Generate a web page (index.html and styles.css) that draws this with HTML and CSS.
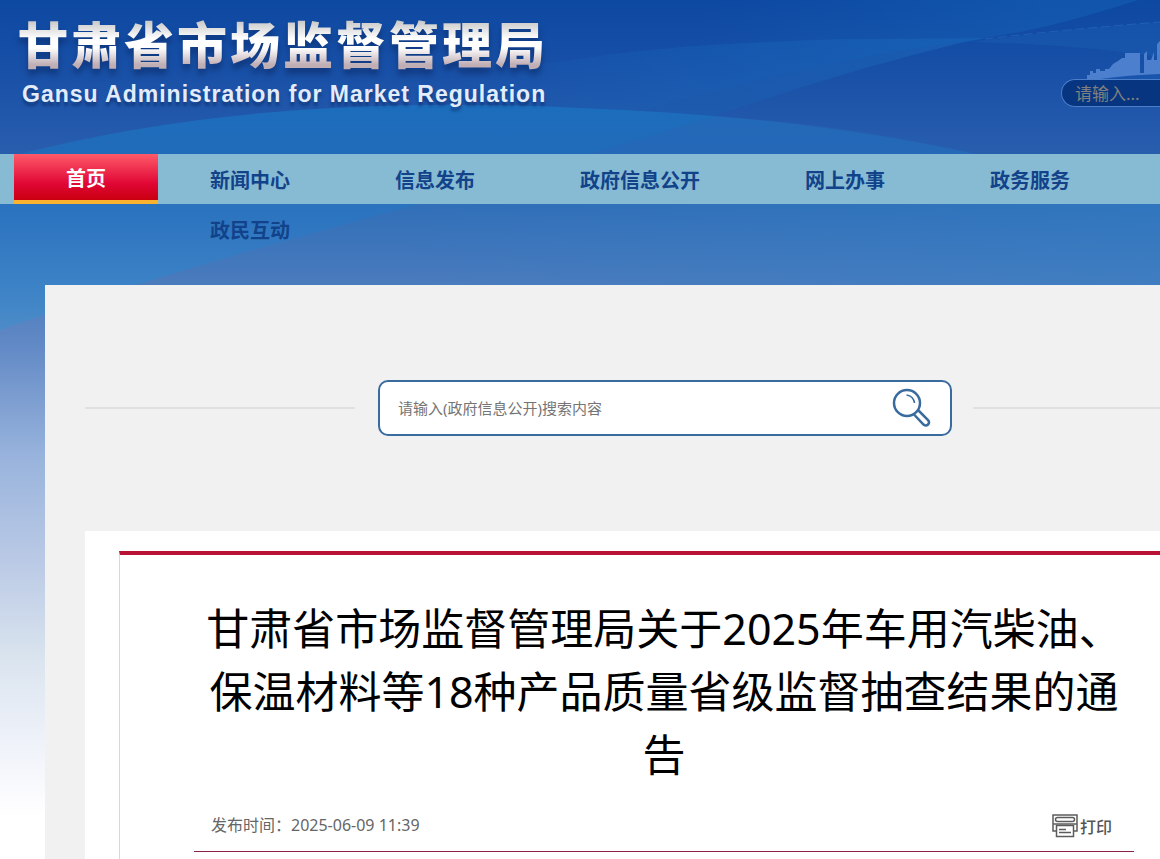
FILE: index.html
```
<!DOCTYPE html>
<html lang="zh-CN">
<head>
    <meta charset="UTF-8">
    <meta name="viewport" content="width=device-width, initial-scale=1.0">
    <title>甘肃省市场监督管理局</title>
    <link rel="stylesheet" href="styles.css">
</head>
<body>
    <div class="page">
        <svg class="page-bg" viewBox="0 0 1160 859" preserveAspectRatio="none" aria-hidden="true">
            <defs>
                <linearGradient id="sky" x1="0" y1="0" x2="0" y2="1">
                    <stop offset="0" stop-color="#0d48a1"/>
                    <stop offset=".08" stop-color="#1850a7"/>
                    <stop offset=".18" stop-color="#295eae"/>
                    <stop offset=".24" stop-color="#316fb8"/>
                    <stop offset=".33" stop-color="#4a7bbd"/>
                    <stop offset=".4" stop-color="#6189c5"/>
                    <stop offset=".53" stop-color="#98b3dc"/>
                    <stop offset=".66" stop-color="#bccbe6"/>
                    <stop offset=".77" stop-color="#dbe5ef"/>
                    <stop offset=".88" stop-color="#f2f4fb"/>
                    <stop offset=".95" stop-color="#ffffff"/>
                </linearGradient>
                <linearGradient id="swoop" gradientUnits="userSpaceOnUse" x1="0" y1="105" x2="0" y2="330">
                    <stop offset="0" stop-color="#1c6dbd"/>
                    <stop offset=".22" stop-color="#216bb9"/>
                    <stop offset=".45" stop-color="#2b72bf"/>
                    <stop offset=".8" stop-color="#3b82c6"/>
                    <stop offset="1" stop-color="#4c8bc8"/>
                </linearGradient>
                <linearGradient id="beam" gradientUnits="userSpaceOnUse" x1="440" y1="0" x2="980" y2="0">
                    <stop offset="0" stop-color="#1768bc" stop-opacity="0"/>
                    <stop offset="1" stop-color="#1768bc" stop-opacity=".7"/>
                </linearGradient>
                <linearGradient id="glow" gradientUnits="userSpaceOnUse" x1="700" y1="0" x2="1040" y2="0">
                    <stop offset="0" stop-color="#1768bc" stop-opacity="0"/>
                    <stop offset="1" stop-color="#1768bc" stop-opacity=".4"/>
                </linearGradient>
                <linearGradient id="right" x1="0" y1="0" x2="1" y2="0">
                    <stop offset="0" stop-color="#2f80c6" stop-opacity="0"/>
                    <stop offset="1" stop-color="#2f80c6" stop-opacity=".4"/>
                </linearGradient>
            </defs>
            <rect width="1160" height="859" fill="url(#sky)"/>
            <path d="M700 0H1138Q1070 22 1020 32L985 38Q780 38 700 46Z" fill="url(#glow)"/>
            <path d="M440 85Q500 68 580 59Q680 43 850 39L985 38L960 43Q840 72 715 116Q610 105 480 109L440 112Z" fill="url(#beam)"/>
            <path d="M645 110Q800 64 970 40L960 43Q840 72 715 116Z" fill="#1d57aa" opacity=".4"/>
            <path d="M970 42Q1060 30 1160 22V57Q1070 44 970 42Z" fill="#1d63b6" opacity=".35"/>
            <path d="M985 39Q1070 29 1160 22" fill="none" stroke="#2a6dbd" stroke-dasharray="9 4" opacity=".6"/>
            <path d="M20 154Q260 92 580 108Q800 116 975 154L980 204H420Q170 270 0 330V154Z" fill="url(#swoop)"/>
            <path d="M590 154L715 116Q850 125 975 154Z" fill="#2766b5" opacity=".5"/>
            <path d="M400 204H1160V285H400Z" fill="url(#right)"/>
            <path d="M1087 79v-4h3v-4h3v2h3v-4h4v2h5v-2h4l4-5 5-3 4-3h3v-5h15v20h4V54l3-3v9h4l3-8v8h3V44l3-3V79Z" fill="#4c80ce"/>
            <path d="M1100 79Q1128 75 1160 74V79Z" fill="#1a55ad"/>
        </svg>

        <header class="header">
            <div class="logo">
                <h1>甘肃省市场监督管理局</h1>
                <p>Gansu Administration for Market Regulation</p>
            </div>
            <input class="site-search" type="text" placeholder="请输入..." aria-label="站内搜索">
        </header>

        <nav class="nav">
            <a class="nav-home" href="#">首页</a>
            <ul class="nav-list">
                <li><a href="#">新闻中心</a></li>
                <li><a href="#">信息发布</a></li>
                <li><a href="#">政府信息公开</a></li>
                <li><a href="#">网上办事</a></li>
                <li><a href="#">政务服务</a></li>
                <li><a href="#">政民互动</a></li>
            </ul>
        </nav>

        <main class="main">
            <div class="search-row">
                <form class="search-box">
                    <input type="text" placeholder="请输入(政府信息公开)搜索内容" aria-label="政府信息公开搜索">
                    <button type="submit" aria-label="搜索">
                        <svg width="40" height="40" viewBox="0 0 40 40" fill="none" stroke="#3a6b9f" stroke-width="2.500">
                            <circle cx="15" cy="15" r="13"/>
                            <path d="M14.500 7Q21.500 8 22.500 15" stroke-width="1.500"/>
                            <path d="M22 26.500L31.500 36.500Q34 38.500 36 36.500T36 32L26.500 22.500"/>
                        </svg>
                    </button>
                </form>
            </div>

            <div class="content">
                <article class="article">
                    <h2>甘肃省市场监督管理局关于2025年车用汽柴油、保温材料等18种产品质量省级监督抽查结果的通告</h2>
                    <div class="article-meta">
                        <span>发布时间：2025-06-09 11:39</span>
                        <button class="print" type="button">
                            <svg width="26" height="24" viewBox="0 0 26 24" fill="none" stroke="#5c5c5c" stroke-width="1.500">
                                <path d="M4 17H1V1H25V17H22"/>
                                <rect x="3.500" y="3.500" width="19" height="4" rx="2"/>
                                <path d="M1 10H25"/>
                                <rect x="4.500" y="11.500" width="17" height="11" fill="#fff"/>
                                <path d="M7 15.500H14M7 18.500H19"/>
                            </svg>
                            打印
                        </button>
                    </div>
                </article>
            </div>
        </main>
    </div>
</body>
</html>
```

FILE: styles.css
```
* {
    margin: 0;
    padding: 0;
    box-sizing: border-box;
}

body {
    background: #fff;
    color: #000;
    font-family: "Noto Sans", "Noto Sans CJK SC", sans-serif;
    font-size: 16px;
}

a {
    text-decoration: none;
}

.page {
    position: relative;
    display: flex;
    flex-direction: column;
    min-height: 100vh;
    overflow: hidden;
}

/* sky backdrop behind the whole page */
.page-bg {
    position: absolute;
    top: 0;
    left: 0;
    z-index: -1;
    width: 100%;
    height: 100%;
}

.header {
    display: flex;
    justify-content: space-between;
    align-items: flex-start;
    height: 154px;
    padding: 12px 0 0 18px;
}

.logo h1 {
    font-family: "Noto Sans CJK SC", sans-serif;
    font-size: 50px;
    font-weight: 900;
    line-height: 60px;
    letter-spacing: 3px;
    background: linear-gradient(#c9c9c9 15%, #fff 45%, #fff 60%, #bfaeb4 88%);
    -webkit-background-clip: text;
    background-clip: text;
    color: transparent;
    filter: drop-shadow(0 6px 3px rgba(10, 40, 100, 0.6));
}

.logo p {
    padding: 8px 4px;
    color: #e3ecfb;
    font-family: "Liberation Sans", Arial, sans-serif;
    font-size: 23px;
    font-weight: bold;
    line-height: 28px;
    letter-spacing: 1px;
    text-shadow: 0 4px 3px rgba(10, 40, 100, 0.6);
}

.site-search {
    width: 99px;
    height: 28px;
    margin-top: 67px;
    padding-left: 13px;
    background: #07357f;
    border: 1px solid #4a7dca;
    border-right: 0;
    border-radius: 14px 0 0 14px;
    color: #fff;
    font-family: inherit;
    font-size: 17px;
}

.site-search::placeholder {
    color: #808080;
}

.nav {
    display: flex;
    height: 50px;
    padding-left: 14px;
    background: #87bbd3;
    font-size: 20px;
    font-weight: bold;
    line-height: 50px;
}

.nav-home {
    flex: none;
    width: 144px;
    border-bottom: 4px solid #fbb32f;
    background: linear-gradient(#fe5a69, #e00635 65%, #c9000f);
    color: #fff;
    text-align: center;
}

.nav-list {
    display: flex;
    flex-wrap: wrap;
    align-content: flex-start;
    column-gap: 1px;
    list-style: none;
}

.nav-list a {
    display: block;
    padding: 4px 52px 0;
    color: #12438a;
    line-height: 46px;
}

.main {
    flex: 1;
    display: flex;
    flex-direction: column;
    margin: 81px 0 0 45px;
    padding-left: 40px;
    background: #f1f1f1;
}

.search-row {
    display: flex;
    align-items: center;
    padding: 95px 0;
}

.search-row::before,
.search-row::after {
    content: "";
    height: 2px;
    background: #e0e0e0;
}

.search-row::before {
    width: 270px;
}

.search-row::after {
    flex: 1;
}

.search-box {
    display: flex;
    align-items: center;
    width: 574px;
    height: 56px;
    margin: 0 21px 0 23px;
    padding: 0 18px;
    background: #fff;
    border: 2px solid #3a6b9f;
    border-radius: 10px;
}

.search-box input {
    flex: 1;
    border: 0;
    outline: none;
    font-family: inherit;
    font-size: 15px;
}

.search-box input::placeholder {
    color: #757575;
}

.search-box button {
    height: 40px;
    background: none;
    border: 0;
    cursor: pointer;
}

.content {
    flex: 1;
    display: flex;
    padding: 20px 0 0 34px;
    background: #fff;
}

.article {
    flex: 1;
    padding: 42px 26px 0 74px;
    border-top: 4px solid #b81334;
    border-left: 1px solid #d8d8d8;
}

.article h2 {
    font-size: 43px;
    font-weight: normal;
    line-height: 63px;
    text-align: center;
}

.article-meta {
    display: flex;
    justify-content: space-between;
    align-items: center;
    height: 66px;
    padding: 10px 22px 0 17px;
    border-bottom: 1px solid #8c1f4c;
    color: #666;
}

.print {
    display: flex;
    align-items: center;
    gap: 2px;
    padding-top: 4px;
    background: none;
    border: 0;
    color: #555;
    font-family: inherit;
    font-size: 16px;
    font-weight: 500;
    cursor: pointer;
}
```
